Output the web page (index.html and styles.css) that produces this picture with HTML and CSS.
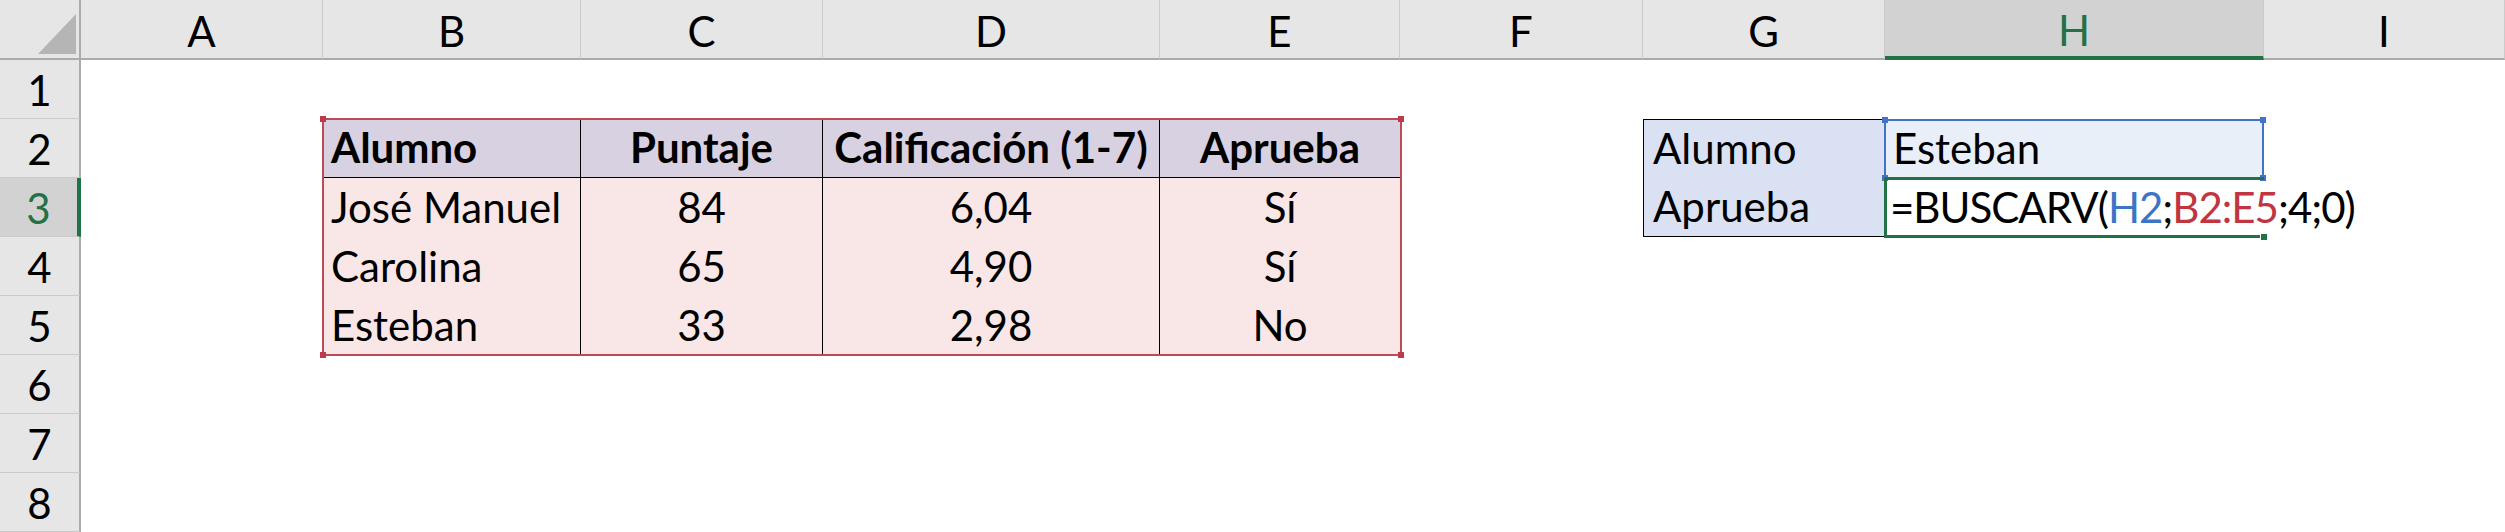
FILE: index.html
```html
<!DOCTYPE html>
<html lang="es">
<head>
<meta charset="utf-8">
<title>BUSCARV</title>
<link rel="stylesheet" href="styles.css">
</head>
<body>
<div class="sheet">
  <div class="corner"><span class="tri"></span></div>
  <div class="colheads">
    <div class="ch">A</div>
    <div class="ch">B</div>
    <div class="ch">C</div>
    <div class="ch">D</div>
    <div class="ch">E</div>
    <div class="ch">F</div>
    <div class="ch">G</div>
    <div class="ch sel">H</div>
    <div class="ch">I</div>
  </div>
  <div class="rowheads">
    <div class="rh">1</div>
    <div class="rh">2</div>
    <div class="rh sel">3</div>
    <div class="rh">4</div>
    <div class="rh">5</div>
    <div class="rh">6</div>
    <div class="rh">7</div>
    <div class="rh">8</div>
  </div>
  <div class="body">
    <div class="tbl">
      <div class="c th vr">Alumno</div>
      <div class="c th vr ctr">Puntaje</div>
      <div class="c th vr ctr">Calificación (1-7)</div>
      <div class="c th ctr">Aprueba</div>

      <div class="c td vr">José Manuel</div>
      <div class="c td vr ctr">84</div>
      <div class="c td vr ctr">6,04</div>
      <div class="c td ctr">Sí</div>

      <div class="c td vr">Carolina</div>
      <div class="c td vr ctr">65</div>
      <div class="c td vr ctr">4,90</div>
      <div class="c td ctr">Sí</div>

      <div class="c td vr">Esteban</div>
      <div class="c td vr ctr">33</div>
      <div class="c td vr ctr">2,98</div>
      <div class="c td ctr">No</div>

      <div class="ref-red">
        <span class="hd red tl"></span><span class="hd red tr"></span>
        <span class="hd red bl"></span><span class="hd red br"></span>
      </div>
    </div>

    <div class="lookup">
      <div class="c glab gtop">Alumno</div>
      <div class="c hval">Esteban</div>
      <div class="c glab gbot">Aprueba</div>
      <div class="c hform"><span>=BUSCARV(</span><span class="f-blue">H2</span><span>;</span><span class="f-red">B2:E5</span><span>;4;0)</span></div>

      <div class="ref-blue">
        <span class="hd blue tl"></span><span class="hd blue tr"></span>
        <span class="hd blue bl"></span><span class="hd blue br"></span>
      </div>
      <div class="active">
        <span class="fill-handle"></span>
      </div>
    </div>
  </div>
</div>
</body>
</html>
```

FILE: styles.css
```css
* {
  box-sizing: border-box;
  margin: 0;
  padding: 0;
}

html, body {
  width: 2505px;
  height: 532px;
  overflow: hidden;
  background: #ffffff;
}

body {
  font-family: Lato, "Liberation Sans", sans-serif;
  font-size: 42px;
  color: #000000;
}

.sheet {
  display: grid;
  grid-template-columns: 81px 2424px;
  grid-template-rows: 60px 472px;
}

/* corner */
.corner {
  background: #e6e6e6;
  border-right: 2px solid #ababab;
  border-bottom: 2px solid #ababab;
  display: flex;
  justify-content: flex-end;
  align-items: flex-end;
  padding: 0 3px 4px 0;
}

.tri {
  width: 38px;
  height: 40px;
  background: #b5b5b5;
  clip-path: polygon(100% 0, 100% 100%, 0 100%);
}

/* column headers */
.colheads {
  display: grid;
  grid-template-columns: 242px 258px 242px 337px 240px 243px 242px 379px 241px;
  background: #e6e6e6;
}

.ch {
  display: flex;
  align-items: center;
  justify-content: center;
  border-right: 1px solid #cbcbcb;
  border-bottom: 2px solid #ababab;
  padding-top: 3px;
}

.ch.sel {
  background: #d2d2d2;
  color: #217346;
  border-bottom: 4px solid #217346;
}

/* row headers */
.rowheads {
  display: grid;
  grid-template-rows: repeat(8, 59px);
  background: #e6e6e6;
}

.rh {
  display: flex;
  align-items: center;
  justify-content: center;
  border-right: 2px solid #ababab;
  border-bottom: 1px solid #cbcbcb;
  padding-top: 2px;
}

.rh.sel {
  background: #d2d2d2;
  color: #217346;
  border-right: 4px solid #217346;
}

/* body */
.body {
  display: grid;
  grid-template-columns: 242px 258px 242px 337px 240px 243px 242px 379px 241px;
  grid-template-rows: repeat(8, 59px);
}

.c {
  display: flex;
  align-items: flex-end;
  padding: 0 8px 9px;
  white-space: nowrap;
  line-height: 1;
}

.c.ctr {
  justify-content: center;
}

/* data table */
.tbl {
  grid-column: 2 / 6;
  grid-row: 2 / 6;
  display: grid;
  grid-template-columns: 258px 242px 337px 240px;
  grid-template-rows: repeat(4, 59px);
  position: relative;
}

.th {
  background: #d8d1e1;
  font-weight: 700;
  border-bottom: 1px solid #000000;
}

.td {
  background: #f9e7e7;
}

.vr {
  border-right: 1px solid #000000;
}

.ref-red {
  position: absolute;
  top: -1px;
  left: -1px;
  right: -2px;
  bottom: -1px;
  border: 2px solid #bd4a55;
}

.hd {
  position: absolute;
  width: 6px;
  height: 6px;
}

.hd.red { background: #bd3a4a; }
.hd.blue { background: #4472c4; }

.hd.tl { top: -4px; left: -4px; }
.hd.tr { top: -4px; right: -4px; }
.hd.bl { bottom: -4px; left: -4px; }
.hd.br { bottom: -4px; right: -4px; }

/* lookup box */
.lookup {
  grid-column: 7 / 9;
  grid-row: 2 / 4;
  display: grid;
  grid-template-columns: 242px 379px;
  grid-template-rows: 59px 59px;
  position: relative;
}

.glab {
  background: #d9e1f2;
  border-left: 1px solid #000000;
  padding-left: 9px;
}

.gtop {
  border-top: 1px solid #000000;
}

.gbot {
  border-bottom: 1px solid #000000;
}

.hval {
  background: #e9eff9;
  padding-left: 8px;
}

.hform {
  padding-left: 5px;
  overflow: visible;
  letter-spacing: -1px;
}

.f-blue { color: #3c74c6; }
.f-red { color: #c0353f; }

.ref-blue {
  position: absolute;
  top: 0;
  left: 241px;
  width: 380px;
  height: 60px;
  border: 2px solid #4472c4;
}

.active {
  position: absolute;
  top: 58px;
  left: 241px;
  width: 380px;
  height: 61px;
  border-top: 3px solid #217346;
  border-left: 3px solid #217346;
  border-bottom: 3px solid #217346;
}

.fill-handle {
  position: absolute;
  right: -4px;
  bottom: -6px;
  width: 8px;
  height: 8px;
  background: #217346;
  border: 1px solid #ffffff;
}
```
